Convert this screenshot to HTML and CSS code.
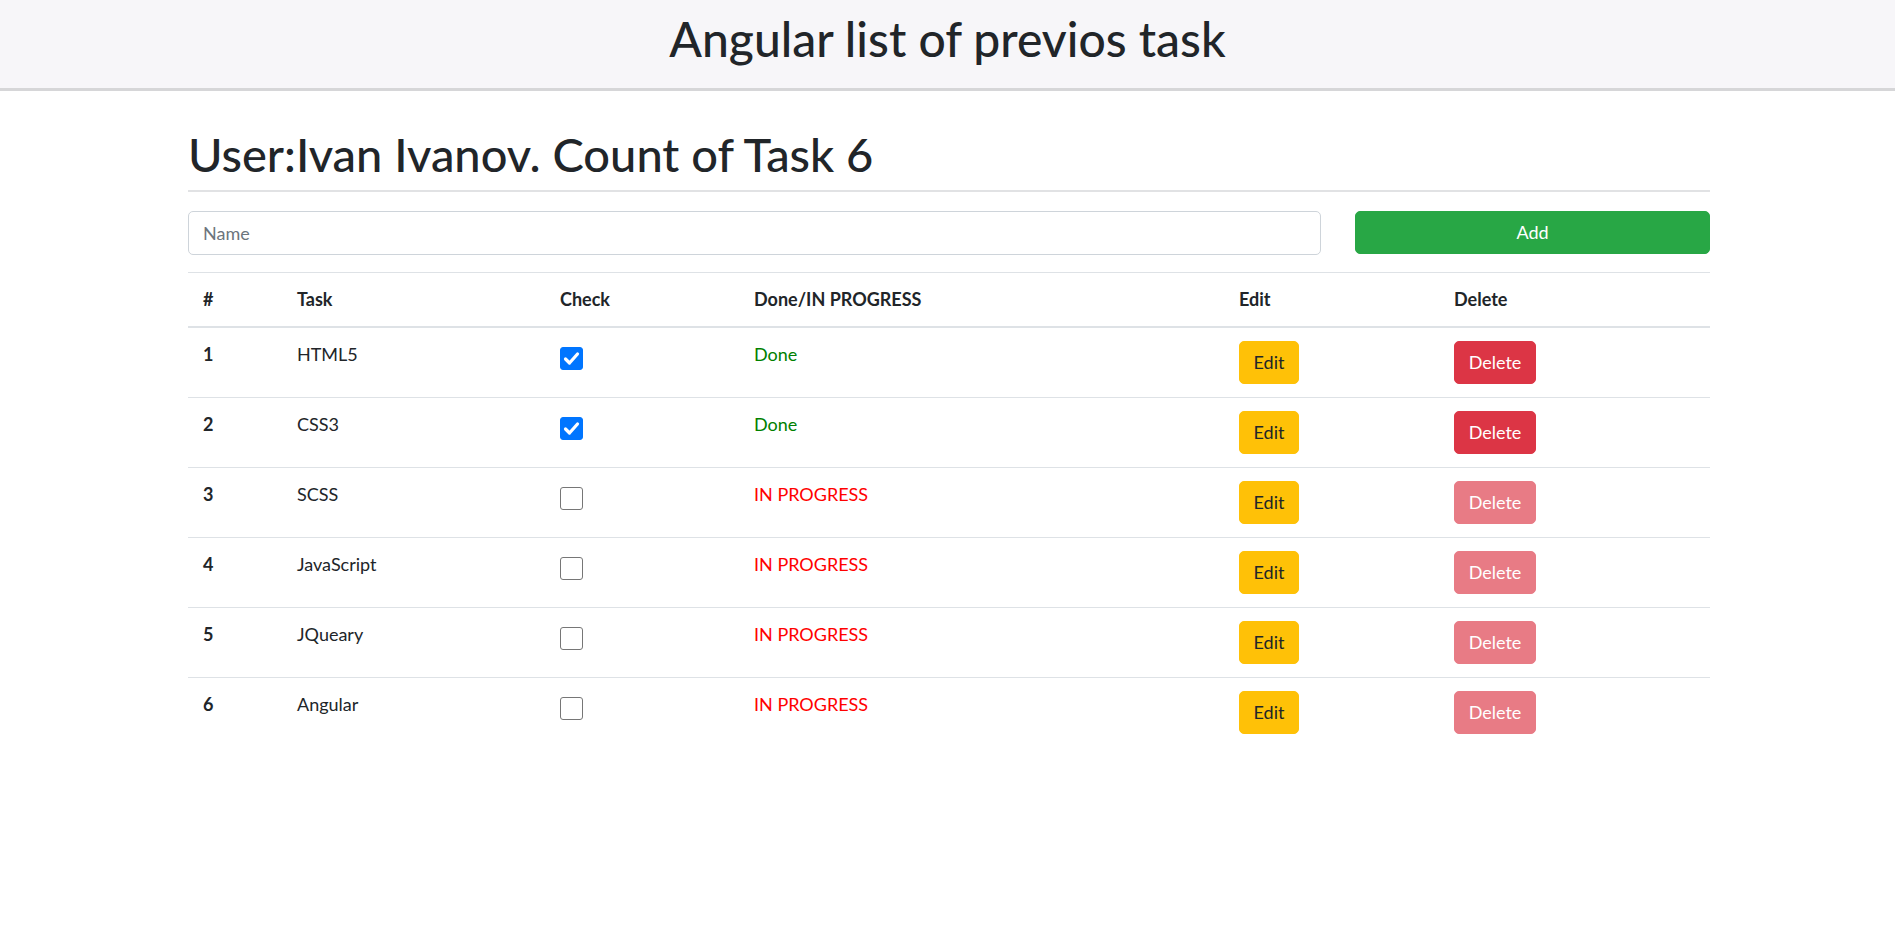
FILE: index.html
```html
<!DOCTYPE html>
<html lang="en">
<head>
<meta charset="utf-8">
<title>Angular list of previos task</title>
<link rel="stylesheet" href="styles.css">
</head>
<body>
<header class="topbar">
  <h1 class="topbar-title">Angular list of previos task</h1>
</header>
<main class="container">
  <h1 class="user-title">User:Ivan Ivanov. Count of Task 6</h1>
  <hr class="divider">
  <form class="add-row">
    <input class="name-input" type="text" placeholder="Name">
    <button class="btn btn-add" type="button">Add</button>
  </form>
  <table class="tasks">
    <colgroup>
      <col class="c-num"><col class="c-task"><col class="c-check"><col class="c-status"><col class="c-edit"><col class="c-del">
    </colgroup>
    <thead>
      <tr><th>#</th><th>Task</th><th>Check</th><th>Done/IN PROGRESS</th><th>Edit</th><th>Delete</th></tr>
    </thead>
    <tbody>
      <tr>
        <th>1</th><td>HTML5</td>
        <td><span class="cb checked"><svg viewBox="0 0 23 23" width="23" height="23"><path d="M5.5 12 L9.5 16 L17.5 7" fill="none" stroke="#fff" stroke-width="3.2" stroke-linecap="round" stroke-linejoin="round"/></svg></span></td>
        <td class="done">Done</td>
        <td><button class="btn btn-edit" type="button">Edit</button></td>
        <td><button class="btn btn-del" type="button">Delete</button></td>
      </tr>
      <tr>
        <th>2</th><td>CSS3</td>
        <td><span class="cb checked"><svg viewBox="0 0 23 23" width="23" height="23"><path d="M5.5 12 L9.5 16 L17.5 7" fill="none" stroke="#fff" stroke-width="3.2" stroke-linecap="round" stroke-linejoin="round"/></svg></span></td>
        <td class="done">Done</td>
        <td><button class="btn btn-edit" type="button">Edit</button></td>
        <td><button class="btn btn-del" type="button">Delete</button></td>
      </tr>
      <tr>
        <th>3</th><td>SCSS</td>
        <td><span class="cb"></span></td>
        <td class="progress">IN PROGRESS</td>
        <td><button class="btn btn-edit" type="button">Edit</button></td>
        <td><button class="btn btn-del disabled" type="button">Delete</button></td>
      </tr>
      <tr>
        <th>4</th><td>JavaScript</td>
        <td><span class="cb"></span></td>
        <td class="progress">IN PROGRESS</td>
        <td><button class="btn btn-edit" type="button">Edit</button></td>
        <td><button class="btn btn-del disabled" type="button">Delete</button></td>
      </tr>
      <tr>
        <th>5</th><td>JQueary</td>
        <td><span class="cb"></span></td>
        <td class="progress">IN PROGRESS</td>
        <td><button class="btn btn-edit" type="button">Edit</button></td>
        <td><button class="btn btn-del disabled" type="button">Delete</button></td>
      </tr>
      <tr>
        <th>6</th><td>Angular</td>
        <td><span class="cb"></span></td>
        <td class="progress">IN PROGRESS</td>
        <td><button class="btn btn-edit" type="button">Edit</button></td>
        <td><button class="btn btn-del disabled" type="button">Delete</button></td>
      </tr>
    </tbody>
  </table>
</main>
</body>
</html>
```
FILE: styles.css
```css
* { box-sizing: border-box; }

html, body {
  margin: 0;
  padding: 0;
  background: #fff;
  color: #212529;
  font-family: Lato, "Open Sans", sans-serif;
  font-size: 18px;
  line-height: 27px;
}

.topbar {
  background: #f7f6f9;
  border-bottom: 3px solid #d6d6d8;
  padding: 9px 0 19px;
  text-align: center;
}

.topbar-title {
  margin: 0;
  font-size: 48px;
  line-height: 60px;
  font-weight: 500;
}

.container {
  width: 1522px;
  margin: 0 0 0 188px;
  padding-top: 36px;
}

.user-title {
  margin: 0;
  font-size: 47px;
  line-height: 54px;
  font-weight: 500;
}

.divider {
  margin: 9px 0 0;
  border: 0;
  border-top: 2px solid #e1e2e4;
  height: 0;
}

.add-row {
  display: flex;
  gap: 34px;
  margin-top: 19px;
  align-items: flex-start;
}

.name-input {
  flex: 1;
  height: 44px;
  border: 1px solid #ced4da;
  border-radius: 5px;
  padding: 0 14px;
  font-family: inherit;
  font-size: 18px;
  color: #495057;
  outline: none;
}

.name-input::placeholder { color: #6c757d; }

.btn {
  font-family: inherit;
  font-size: 18px;
  border: 1px solid transparent;
  border-radius: 5px;
  height: 43px;
  line-height: 41px;
  padding: 0;
  text-align: center;
  cursor: pointer;
}

.btn-add {
  width: 355px;
  background: #28a745;
  border-color: #28a745;
  color: #fff;
}

.btn-edit {
  width: 60px;
  background: #ffc107;
  border-color: #ffc107;
  color: #212529;
}

.btn-del {
  width: 82px;
  background: #dc3545;
  border-color: #dc3545;
  color: #fff;
}

.btn-del.disabled { opacity: .65; }

.tasks {
  margin-top: 17px;
  width: 1522px;
  border-collapse: collapse;
  table-layout: fixed;
}

.c-num { width: 94px; }
.c-task { width: 263px; }
.c-check { width: 194px; }
.c-status { width: 485px; }
.c-edit { width: 215px; }
.c-del { width: 271px; }

.tasks th, .tasks td {
  text-align: left;
  vertical-align: top;
  padding: 13px 15px;
  border-top: 1px solid #dee2e6;
}

.tasks th { font-weight: 700; }

.tasks thead th {
  border-bottom: 2px solid #dee2e6;
}

.tasks tbody tr:first-child th,
.tasks tbody tr:first-child td { border-top: 0; }

.tasks td.done { color: #008000; }
.tasks td.progress { color: #ff0000; }

.cb {
  display: block;
  width: 23px;
  height: 23px;
  margin-top: 6px;
  border: 1px solid #767676;
  border-radius: 3px;
  background: #fff;
}

.cb.checked {
  background: #0075ff;
  border-color: #0075ff;
}

.cb svg { display: block; margin: -1px; }
```
